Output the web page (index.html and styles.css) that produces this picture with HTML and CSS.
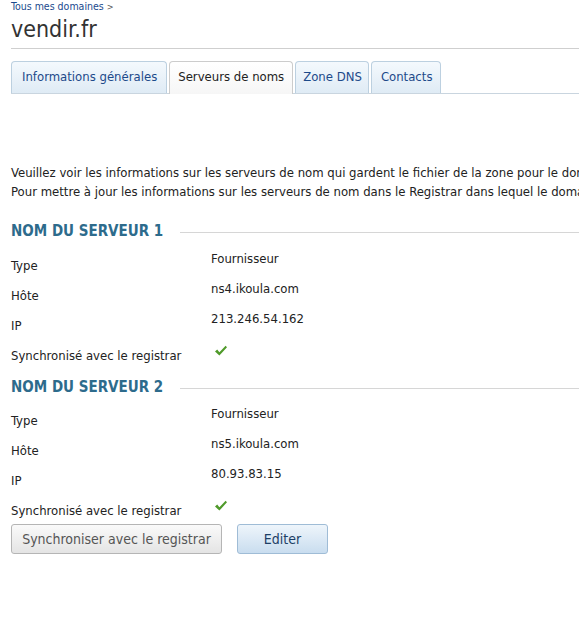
FILE: index.html
```html
<!DOCTYPE html>
<html lang="fr">
<head>
<meta charset="utf-8">
<title>vendir.fr</title>
<link rel="stylesheet" href="styles.css">
</head>
<body>
<div class="page">
  <div class="crumb"><a href="#">Tous mes domaines</a> <span class="sep">&gt;</span></div>
  <h1 class="title">vendir.fr</h1>
  <div class="rule"></div>
  <ul class="tabs">
    <li class="tab tab-info">Informations générales</li>
    <li class="tab tab-ns active">Serveurs de noms</li>
    <li class="tab tab-dns">Zone DNS</li>
    <li class="tab tab-contacts">Contacts</li>
  </ul>
  <div class="intro">
    <p>Veuillez voir les informations sur les serveurs de nom qui gardent le fichier de la zone pour le domaine.</p>
    <p>Pour mettre à jour les informations sur les serveurs de nom dans le Registrar dans lequel le domaine est enregistré.</p>
  </div>

  <section class="server">
    <h2 class="heading"><span>NOM DU SERVEUR 1</span></h2>
    <div class="row"><div class="label">Type</div><div class="value">Fournisseur</div></div>
    <div class="row"><div class="label">Hôte</div><div class="value">ns4.ikoula.com</div></div>
    <div class="row"><div class="label">IP</div><div class="value">213.246.54.162</div></div>
    <div class="row"><div class="label">Synchronisé avec le registrar</div><div class="value"><svg class="check" width="14" height="12" viewBox="0 0 14 12"><path d="M1 6.5 L3.2 4.6 L5.4 7.2 L11.6 0.8 L13 2.3 L5.4 10.6 Z" fill="#4f9a2a"/></svg></div></div>
  </section>

  <section class="server">
    <h2 class="heading"><span>NOM DU SERVEUR 2</span></h2>
    <div class="row"><div class="label">Type</div><div class="value">Fournisseur</div></div>
    <div class="row"><div class="label">Hôte</div><div class="value">ns5.ikoula.com</div></div>
    <div class="row"><div class="label">IP</div><div class="value">80.93.83.15</div></div>
    <div class="row"><div class="label">Synchronisé avec le registrar</div><div class="value"><svg class="check" width="14" height="12" viewBox="0 0 14 12"><path d="M1 6.5 L3.2 4.6 L5.4 7.2 L11.6 0.8 L13 2.3 L5.4 10.6 Z" fill="#4f9a2a"/></svg></div></div>
  </section>

  <div class="actions">
    <button class="btn btn-grey">Synchroniser avec le registrar</button>
    <button class="btn btn-blue">Editer</button>
  </div>
</div>
</body>
</html>
```

FILE: styles.css
```css
html, body {
  margin: 0;
  padding: 0;
  background: #fff;
  overflow: hidden;
}
body {
  font-family: "DejaVu Sans Condensed", "DejaVu Sans", sans-serif;
  font-size: 13px;
  color: #222;
}
.page {
  padding-left: 11px;
}
.crumb {
  font-size: 10.5px;
  line-height: 12px;
  height: 12px;
  color: #1a4a8e;
}
.crumb a {
  color: #1a4a8e;
  text-decoration: none;
}
.crumb .sep {
  color: #555;
  font-size: 9px;
}
.title {
  margin: 4px 0 0;
  font-size: 23px;
  font-weight: normal;
  line-height: 26px;
  color: #333;
  height: 31px;
}
.rule {
  border-top: 1px solid #cfcfcf;
  margin-top: 1px;
}
.tabs {
  list-style: none;
  margin: 12px 0 0;
  padding: 0;
  display: flex;
  gap: 2px;
  border-bottom: 1px solid #c9d5df;
  height: 32px;
}
.tab {
  box-sizing: border-box;
  height: 32px;
  padding: 0 10px;
  line-height: 30px;
  border: 1px solid #bcd0e0;
  border-bottom: none;
  border-radius: 4px 4px 0 0;
  background: linear-gradient(#f4f9fd, #dfebf5);
  color: #1d4a8a;
  white-space: nowrap;
}
.tab-info {
  padding: 0 9px 0 10px;
}
.tab-ns {
  padding: 0 8px;
}
.tab-dns {
  padding: 0 6px 0 7px;
}
.tab-contacts {
  padding: 0 8px 0 9px;
}
.tab.active {
  height: 33px;
  margin-bottom: -1px;
  background: linear-gradient(#ffffff, #f6f6f6);
  border-color: #cccccc;
  color: #222;
}
.intro {
  margin-top: 69px;
  white-space: nowrap;
}
.intro p {
  margin: 0;
  line-height: 19px;
}
.heading {
  display: flex;
  align-items: center;
  gap: 17px;
  margin: 20px 0 7px;
  font-size: 15px;
  font-weight: bold;
  color: #2d6b8c;
  line-height: 20px;
  white-space: nowrap;
}
.heading::after {
  content: "";
  flex: 1;
  border-top: 1px solid #d6d6d6;
  margin-top: 2px;
}
.server + .server .heading {
  margin-top: 9px;
  margin-bottom: 6px;
}
.row {
  display: grid;
  grid-template-columns: 200px 1fr;
  height: 30px;
}
.label {
  padding-top: 10px;
  line-height: 16px;
}
.value {
  padding-top: 3px;
  line-height: 16px;
}
.check {
  display: block;
  margin: 4px 0 0 3px;
}
.actions {
  display: flex;
  gap: 15px;
  margin-top: 1px;
}
.btn {
  box-sizing: border-box;
  height: 30px;
  font-family: inherit;
  font-size: 14px;
  border-radius: 3px;
  padding: 0 8px;
  cursor: pointer;
}
.btn-grey {
  width: 211px;
  border: 1px solid #b5b5b5;
  background: linear-gradient(#fafafa, #e4e4e4);
  color: #555;
}
.btn-blue {
  width: 91px;
  border: 1px solid #9fbcd6;
  background: linear-gradient(#eef5fb, #c9ddef);
  color: #1d3f66;
}
```
